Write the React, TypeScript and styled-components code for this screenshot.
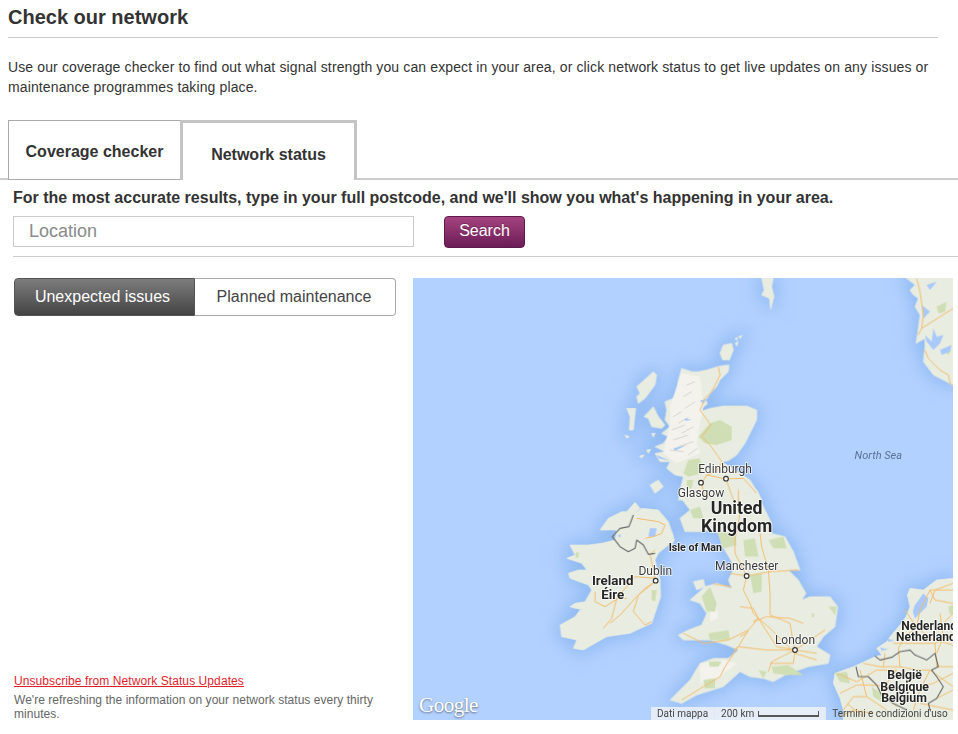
import React from 'react'
import styled, { createGlobalStyle } from 'styled-components'

type MapPart = {
    at: string
    land: string[]
    pale?: string[]
    flecks?: string[]
    green?: string[]
    water?: string[]
    roads?: string[]
    borders?: string[]
}

// each part is traced in its own local coordinates and moved into place by `at`
const MAP_PARTS: MapPart[] = [
    {
        at: 'translate(240 -30)',
        land: [
            '185,115 215,125 235,125 260,120 300,108 327,105 325,125 300,150 290,170 270,190 258,210 262,222 245,235 240,245 270,235 310,228 380,228 410,240 410,270 395,300 375,340 350,375 325,392 305,395 345,420 390,450 415,490 425,510 175,510 180,480 190,440 165,435 140,415 150,395 120,395 105,370 135,365 105,350 130,340 145,320 125,310 150,290 135,270 140,240 135,215 160,205 170,190 175,150',
            '72,260 100,230 115,260 135,285 125,295 95,290 85,265',
            '50,170 100,125 110,135 105,165 75,205 55,220 50,200 60,190',
            '20,235 47,235 40,300 28,300 30,260',
            '15,315 28,320 20,325',
            '58,378 72,375 65,385',
            '80,360 92,358 85,370',
            '95,310 105,310 100,322',
            '90,465 115,450 130,470 105,490',
            '300,70 310,45 335,40 340,60 328,90 308,90',
            '345,40 355,35 350,48',
            '345,25 352,22 350,32',
            '355,20 367,17 360,26',
        ],
        pale: ['185,130 240,140 250,230 240,280 230,340 240,370 170,400 130,370 150,280 150,230 170,170'],
        flecks: [
            '160,260 185,245',
            '175,280 205,262',
            '155,300 195,285',
            '185,310 220,290',
            '160,330 205,315',
            '175,350 220,335',
            '195,235 225,215',
            '190,200 215,185',
            '200,165 225,155',
            '150,360 190,365',
            '205,375 232,355',
        ],
        green: [
            '235,320 270,280 300,270 335,290 335,330 290,345 255,340',
            '205,390 240,385 245,430 205,440 190,430',
            '200,450 220,450 215,475 200,475',
        ],
        water: ['240,212 262,205 250,222', '110,375 150,392 115,385', '160,355 200,345 165,362', '195,265 215,270 195,272'],
        roads: [
            '295,110 300,135 275,185 255,205 240,240 272,285 245,320 270,345 295,380 305,395 290,425 260,435 245,460',
            '318,447 260,435',
            '318,447 370,445 410,490',
            '318,447 340,510',
            '245,460 255,510',
        ],
    },
    {
        at: 'translate(360 450)',
        land: [
            '290,0 310,50 335,100 335,130 375,140 400,185 420,240 385,240 415,270 438,310 425,330 450,320 510,320 533,350 525,410 490,440 470,470 510,495 505,520 445,530 375,555 340,575 310,565 270,560 240,545 190,590 110,615 65,640 30,630 60,600 90,570 120,520 160,505 205,505 235,480 200,465 150,450 110,450 70,450 55,435 85,420 125,405 140,370 120,340 90,330 135,290 170,280 215,295 205,270 220,240 215,215 200,190 185,165 180,130 150,120 120,125 75,125 60,85 90,60 60,20 70,0',
            '100,275 130,268 135,290 110,300',
        ],
        green: [
            '90,60 120,50 130,85 100,85',
            '170,125 225,130 230,165 190,175',
            '250,150 285,145 295,200 255,200',
            '325,150 370,140 380,175 340,175',
            '270,255 305,250 305,305 280,310',
            '125,320 150,290 170,340 165,365 140,365',
            '145,430 205,420 210,450 150,450',
            '145,515 185,515 175,530 150,530',
            '130,570 165,565 165,595 135,595',
            '295,540 320,545 310,565',
            '335,530 385,525 430,555 380,555 340,550',
            '455,370 462,370 462,382 455,382',
            '505,350 530,350 525,375',
        ],
        pale: ['150,360 170,350 175,385 150,395', '120,520 190,510 230,520 180,560 120,580'],
        roads: [
            '235,0 235,60 240,70 225,150 225,190 260,258 250,300 270,340 280,370 295,385 330,415 395,480',
            '300,130 305,170 325,240 330,310 330,375 390,400 395,430 405,480',
            '210,250 260,258 330,245 415,240',
            '160,282 215,290',
            '240,350 280,355 295,385 280,395 320,380 390,385 430,400',
            '295,385 265,420 235,470 220,480',
            '295,385 350,470 405,480 470,490',
            '405,480 320,480 235,470',
            '235,470 195,530 180,560 130,590 65,630',
            '405,480 335,515 325,545',
            '405,480 400,520 330,520',
            '405,480 495,420',
            '70,430 130,460 205,450 265,420',
            '240,440 265,425',
            '405,490 470,510',
        ],
    },
    {
        at: 'translate(45 465)',
        land: [
            '215,50 240,22 255,40 235,60 260,40 310,45 340,80 355,125 340,150 310,175 300,195 315,255 317,305 290,385 225,415 155,425 85,465 55,460 65,435 20,425 15,390 60,365 75,345 90,345 60,340 45,335 60,325 90,320 110,285 100,270 45,250 40,235 70,225 95,225 80,205 35,190 60,180 45,150 100,150 140,145 180,135 185,105 135,105 160,70 200,50',
            '338,125 350,110 358,135 350,150',
        ],
        green: ['290,285 305,285 300,320 290,315', '62,172 72,172 70,188 62,188'],
        water: ['285,100 305,100 300,125 280,125', '188,122 198,117 195,128'],
        roads: [
            '245,70 310,80 330,90 320,115 295,125 270,130',
            '300,250 240,245 185,310 170,370 145,400',
            '300,260 270,280 240,310 195,360 165,385',
            '300,260 250,300 235,350 270,390 290,380',
            '120,290 120,320 150,335 190,310 215,310',
            '300,165 285,178 300,250',
        ],
        borders: ['235,60 222,95 195,100 172,125 195,155 220,170 240,160 245,135 265,150 280,178 300,175'],
    },
    {
        at: 'translate(840 690)',
        land: [
            '399,25 350,30 310,60 270,55 262,75 270,110 258,140 240,165 210,200 200,215 170,235 185,255 165,260 100,290 45,310 40,340 60,385 70,420 70,450 399,450',
        ],
        green: ['45,310 80,305 90,340 60,335', '155,350 185,370 185,395 160,380', '385,110 399,105 399,135 388,130'],
        water: ['285,105 310,70 325,85 320,110 285,145 278,125', '200,205 225,212 205,215', '180,232 205,238 185,242'],
        roads: [
            '399,60 330,60 300,120 290,170 330,205 399,225',
            '399,100 345,90 330,60',
            '255,120 275,150 290,170 255,200 235,235 240,290 290,300 330,300 399,350',
            '220,220 280,220 345,220 399,190',
            '345,220 350,290 399,290',
            '130,280 180,290 240,290',
            '50,310 110,335 170,300 230,300',
            '120,300 140,380 200,420',
            '60,370 110,345 150,345 220,350',
            '230,300 200,340 190,370 230,410',
            '70,420 100,380 140,380',
            '330,300 300,360 280,420',
            '350,385 399,360',
            '190,290 195,250',
            '80,400 130,440',
            '300,400 399,420',
            '245,160 290,170',
            '370,160 399,130',
            '360,130 370,200 350,250',
            '330,100 345,60 399,40',
            '270,360 340,340 399,310',
            '60,440 100,420 160,430',
        ],
        borders: [
            '165,258 180,270 215,262 240,245 270,240 285,255 320,270 345,250 355,290 335,300 350,320 370,350 350,385 325,400 330,420',
            '108,290 115,320 145,320 170,345 185,375 220,400 260,420',
        ],
    },
    {
        at: 'translate(1050 -195)',
        land: ['50,10 75,30 60,45 70,60 85,70 75,95 90,120 85,160 78,205 105,190 105,215 100,260 130,300 180,325 190,330 190,0 50,0'],
        green: ['140,95 170,80 165,110 145,115', '155,225 185,225 175,240'],
        water: [
            '105,180 125,200 130,160 140,185 160,180 150,205 130,225 110,200',
            '95,90 120,110 100,130',
            '150,225 185,210 180,230 155,240',
            '110,30 140,20 120,45',
        ],
        roads: [
            '80,10 90,50 100,120 95,160 85,180',
            '95,160 150,125 190,100',
            '105,225 115,250 150,285 175,300 182,330',
        ],
    },
    {
        at: 'translate(0 0)',
        land: ['665,-186 700,-186 695,-160 702,-130 692,-92 688,-125 665,-135 672,-150'],
    },
]

type MapLabelData = { text: string; x: number; y: number; size?: number; bold?: boolean; anchor?: string }

const LABELS: MapLabelData[] = [
    { text: 'Edinburgh', x: 555, y: 398, size: 36 },
    { text: 'Glasgow', x: 483, y: 470, size: 36 },
    { text: 'United', x: 590, y: 522, size: 53, bold: true },
    { text: 'Kingdom', x: 590, y: 576, size: 53, bold: true },
    { text: 'Isle of Man', x: 466, y: 634, size: 32, bold: true },
    { text: 'Manchester', x: 620, y: 690, size: 36 },
    { text: 'Dublin', x: 346, y: 704, size: 36 },
    { text: 'Ireland', x: 218, y: 736, size: 40, bold: true },
    { text: 'Éire', x: 218, y: 778, size: 40, bold: true },
    { text: 'London', x: 765, y: 912, size: 36 },
    { text: 'Nederland', x: 1084, y: 870, size: 36, bold: true, anchor: 'start' },
    { text: 'Netherlands', x: 1068, y: 904, size: 36, bold: true, anchor: 'start' },
    { text: 'België', x: 1094, y: 1016, size: 37, bold: true },
    { text: 'Belgique', x: 1094, y: 1052, size: 37, bold: true },
    { text: 'Belgium', x: 1092, y: 1086, size: 37, bold: true },
]

const PINS = [
    [558, 416],
    [483, 428],
    [620, 708],
    [347, 722],
    [765, 930],
]

function CoverageMap(): JSX.Element {
    return (
        <MapSvg viewBox="-381 -186 1620 1326" aria-label="Map of the United Kingdom">
            <defs>
                <filter id="halo" x="-20%" y="-20%" width="140%" height="140%">
                    <feGaussianBlur stdDeviation="26" />
                </filter>
                <filter id="soft" x="-5%" y="-5%" width="110%" height="110%">
                    <feGaussianBlur stdDeviation="2" />
                </filter>
            </defs>
            <rect x="-381" y="-186" width="1620" height="1326" fill="#b3d1ff" />
            <g filter="url(#halo)">
                {MAP_PARTS.map(part =>
                    part.land.map(points => (
                        <polygon key={points} transform={part.at} points={points} fill="#8fb9f2" stroke="#8fb9f2" strokeWidth="24" />
                    ))
                )}
            </g>
            <g filter="url(#soft)">
                {MAP_PARTS.map(part =>
                    part.land.map(points => (
                        <polygon key={points} transform={part.at} points={points} fill="#e9ede1" stroke="#e9ede1" strokeWidth="2" strokeLinejoin="round" />
                    ))
                )}
                {MAP_PARTS.map(part => (
                    <g key={part.at} transform={part.at}>
                        {part.pale?.map(points => (
                            <polygon key={points} points={points} fill="#f3f2ed" />
                        ))}
                        {part.flecks?.map(points => (
                            <polyline key={points} points={points} fill="none" stroke="#d9d7cc" strokeWidth="3" />
                        ))}
                        {part.green?.map(points => (
                            <polygon key={points} points={points} fill="#cfdeb4" />
                        ))}
                        {part.water?.map(points => (
                            <polygon key={points} points={points} fill="#a8c9fa" />
                        ))}
                        {part.roads?.map(points => (
                            <polyline key={points} points={points} fill="none" stroke="#f2bd6e" strokeWidth="3" strokeLinejoin="round" />
                        ))}
                        {part.borders?.map(points => (
                            <polyline key={points} points={points} fill="none" stroke="#6d6d6d" strokeWidth="3.5" strokeLinejoin="round" />
                        ))}
                    </g>
                ))}
            </g>
            {PINS.map(([cx, cy]) => (
                <circle key={cx} cx={cx} cy={cy} r="7" fill="#fff" stroke="#333" strokeWidth="3.5" />
            ))}
            {LABELS.map(l => (
                <MapLabel key={l.text} x={l.x} y={l.y} $size={l.size || 36} $bold={l.bold} textAnchor={l.anchor || 'middle'}>
                    {l.text}
                </MapLabel>
            ))}
            <SeaLabel x="1015" y="358">
                North Sea
            </SeaLabel>
        </MapSvg>
    )
}

export default function App(): JSX.Element {
    return (
        <>
            <GlobalStyle />
            <Page>
                <Title>Check our network</Title>
                <Intro>
                    Use our coverage checker to find out what signal strength you can expect in your area, or click
                    network status to get live updates on any issues or maintenance programmes taking place.
                </Intro>
                <Tabs>
                    <Tab>Coverage checker</Tab>
                    <Tab $active>Network status</Tab>
                </Tabs>
                <Panel>
                    <Lead>For the most accurate results, type in your full postcode, and we'll show you what's happening in your area.</Lead>
                    <SearchRow>
                        <LocationInput placeholder="Location" readOnly />
                        <SearchButton type="button">Search</SearchButton>
                    </SearchRow>
                    <Columns>
                        <Sidebar>
                            <Segments>
                                <Segment $active>Unexpected issues</Segment>
                                <Segment>Planned maintenance</Segment>
                            </Segments>
                            <Notes>
                                <Unsubscribe href="#">Unsubscribe from Network Status Updates</Unsubscribe>
                                <Refresh>We're refreshing the information on your network status every thirty minutes.</Refresh>
                            </Notes>
                        </Sidebar>
                        <MapFrame>
                            <CoverageMap />
                            <GoogleMark>Google</GoogleMark>
                            <Attribution>
                                <AttrItem>Dati mappa</AttrItem>
                                <AttrItem>
                                    200 km <ScaleBar />
                                </AttrItem>
                                <AttrTerms>Termini e condizioni d'uso</AttrTerms>
                            </Attribution>
                        </MapFrame>
                    </Columns>
                </Panel>
            </Page>
        </>
    )
}

const GlobalStyle = createGlobalStyle`
    html, body {
        margin: 0;
        background: #fff;
        overflow: hidden;
    }
    body {
        font-family: "Liberation Sans", Arial, sans-serif;
        color: #333;
    }
`

const Page = styled.div`
    width: 958px;
    height: 734px;
    box-sizing: border-box;
    padding-top: 6px;
`

const Title = styled.h1`
    height: 23px;
    margin: 0 20px 0 8px;
    padding-bottom: 8px;
    font-size: 20px;
    line-height: 23px;
    font-weight: 700;
    color: #333;
    border-bottom: 1px solid #ccc;
`

const Intro = styled.p`
    margin: 19px 20px 0 8px;
    font-size: 14px;
    line-height: 20px;
    letter-spacing: 0.125px;
    color: #333;
`

const Tabs = styled.div`
    display: flex;
    align-items: flex-start;
    height: 58px;
    margin-top: 23px;
    padding-left: 8px;
    border-bottom: 2px solid #ccc;
`

const Tab = styled.div<{ $active?: boolean }>`
    box-sizing: border-box;
    display: flex;
    flex: none;
    align-items: center;
    justify-content: center;
    width: ${p => (p.$active ? '177px' : '172px')};
    height: 60px;
    padding-top: ${p => (p.$active ? '6px' : '4px')};
    font-size: 16px;
    font-weight: 700;
    color: #333;
    background: #fff;
    border: ${p => (p.$active ? '3px solid #c4c4c4' : '1px solid #aaa')};
    border-bottom: ${p => (p.$active ? '0' : '1px solid #aaa')};
    border-right: ${p => (p.$active ? '3px solid #c4c4c4' : '0')};
`

const Panel = styled.div`
    padding-left: 13px;
`

const Lead = styled.div`
    margin-top: 8px;
    font-size: 16px;
    line-height: 20px;
    font-weight: 700;
    color: #333;
    white-space: nowrap;
`

const SearchRow = styled.div`
    display: flex;
    align-items: flex-start;
    gap: 30px;
    height: 40px;
    margin-top: 8px;
    border-bottom: 1px solid #ccc;
`

const LocationInput = styled.input`
    box-sizing: border-box;
    width: 401px;
    height: 31px;
    padding: 0 15px;
    font-family: inherit;
    font-size: 18px;
    color: #333;
    border: 1px solid #ccc;
    outline: none;
    &::placeholder {
        color: #8a8a8a;
        opacity: 1;
    }
`

const SearchButton = styled.button`
    box-sizing: border-box;
    width: 81px;
    height: 32px;
    padding: 0 0 3px;
    font-family: inherit;
    font-size: 16px;
    color: #fff;
    text-shadow: 0 -1px 0 rgba(0, 0, 0, 0.25);
    background: linear-gradient(#a5437f, #6c1c56);
    border: 1px solid #5e1a4b;
    border-radius: 4px;
`

const Columns = styled.div`
    display: flex;
    margin-top: 21px;
`

const Sidebar = styled.div`
    display: flex;
    flex-direction: column;
    justify-content: space-between;
    width: 400px;
    height: 443px;
`

const Segments = styled.div`
    display: flex;
    width: 382px;
    height: 38px;
    margin-left: 1px;
`

const Segment = styled.div<{ $active?: boolean }>`
    box-sizing: border-box;
    display: flex;
    align-items: center;
    justify-content: center;
    width: ${p => (p.$active ? '181px' : '201px')};
    padding-right: ${p => (p.$active ? '4px' : '2px')};
    font-size: 16px;
    color: ${p => (p.$active ? '#fff' : '#444')};
    background: ${p => (p.$active ? 'linear-gradient(#7d7d7d, #434343)' : '#fff')};
    border: 1px solid ${p => (p.$active ? '#555' : '#aaa')};
    border-left-width: ${p => (p.$active ? '1px' : '0')};
    border-radius: ${p => (p.$active ? '4px 0 0 4px' : '0 4px 4px 0')};
`

const Notes = styled.div`
    width: 375px;
    margin-left: 1px;
`

const Unsubscribe = styled.a`
    display: block;
    font-size: 12px;
    line-height: 14px;
    letter-spacing: 0.08px;
    color: #e01f2d;
    text-decoration: underline;
`

const Refresh = styled.div`
    margin-top: 5px;
    font-size: 12px;
    line-height: 14px;
    letter-spacing: 0.04px;
    color: #666;
`

const MapFrame = styled.div`
    position: relative;
    width: 540px;
    height: 442px;
    overflow: hidden;
`

const MapSvg = styled.svg`
    display: block;
    width: 540px;
    height: 442px;
`

const MapLabel = styled.text<{ $size: number; $bold?: boolean }>`
    font-family: Roboto, "Liberation Sans", sans-serif;
    font-size: ${p => p.$size}px;
    font-weight: ${p => (p.$bold ? 700 : 400)};
    fill: ${p => (p.$bold ? '#262626' : '#3a3a3a')};
    stroke: rgba(255, 255, 255, 0.75);
    stroke-width: 5px;
    paint-order: stroke;
`

const SeaLabel = styled.text`
    font-family: Roboto, "Liberation Sans", sans-serif;
    font-size: 33px;
    font-style: italic;
    fill: #5a7196;
    text-anchor: middle;
`

const GoogleMark = styled.div`
    position: absolute;
    left: 6px;
    bottom: 3px;
    font-family: "Liberation Serif", serif;
    font-size: 21px;
    line-height: 24px;
    letter-spacing: -0.5px;
    color: #fff;
    text-shadow: 0 1px 2px rgba(60, 60, 60, 0.7);
`

const Attribution = styled.div`
    position: absolute;
    left: 238px;
    right: 0;
    bottom: 0;
    display: flex;
    height: 13px;
    font-family: Roboto, "Liberation Sans", sans-serif;
    font-size: 10px;
    line-height: 13px;
    color: #444;
`

const AttrItem = styled.div`
    display: flex;
    flex: none;
    align-items: center;
    gap: 4px;
    padding: 0 6px;
    background: rgba(245, 245, 245, 0.75);
    border-right: 1px solid #e6e6e6;
`

const AttrTerms = styled.div`
    padding-left: 6px;
    white-space: nowrap;
`

const ScaleBar = styled.span`
    box-sizing: border-box;
    display: block;
    width: 61px;
    height: 6px;
    border: 1px solid #555;
    border-top: 0;
    border-bottom-width: 2px;
`
